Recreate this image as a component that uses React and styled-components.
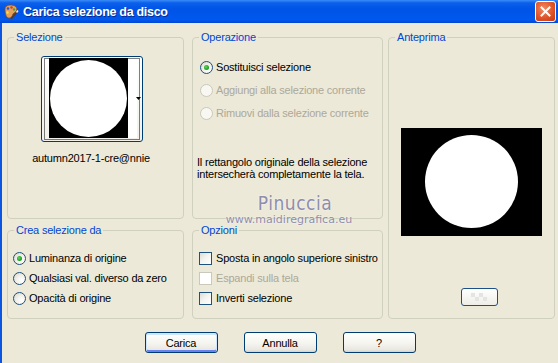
import React from "react"
import styled, { createGlobalStyle } from "styled-components"

const GlobalStyle = createGlobalStyle`
  html, body {
    margin: 0;
    padding: 0;
    background: #ece9d8;
  }
  body {
    font-family: "Liberation Sans", Arial, sans-serif;
    font-size: 11px;
    letter-spacing: -0.2px;
    color: #000;
  }
`

const Window = styled.div`
  position: relative;
  width: 558px;
  height: 363px;
  display: flex;
  flex-direction: column;
  background: #ece9d8;
  overflow: hidden;
`

const TitleBar = styled.div`
  height: 23px;
  flex: none;
  display: flex;
  align-items: center;
  gap: 4px;
  padding: 0 2px 0 3px;
  background: linear-gradient(
    to bottom,
    #3b8cf7 0px,
    #0a5fec 3px,
    #0054e6 40%,
    #0058ee 85%,
    #0047d4 100%
  );
`

const Title = styled.span`
  font-family: "Liberation Sans", Arial, sans-serif;
  font-weight: bold;
  font-size: 12.5px;
  color: #fff;
  text-shadow: 1px 1px 0 #0b2a8f;
  letter-spacing: -0.3px;
`

const CloseButton = styled.div`
  margin-left: auto;
  width: 19px;
  height: 19px;
  border: 1px solid #fff;
  border-radius: 3px;
  display: flex;
  align-items: center;
  justify-content: center;
  background: radial-gradient(circle at 40% 35%, #f08b63 0%, #e0542a 55%, #c2380f 100%);
`

const Frame = styled.div`
  flex: 1;
  display: flex;
  flex-direction: column;
  border-left: 2px solid #0a55e2;
`

const Groups = styled.div`
  display: grid;
  grid-template-columns: 177px 194px 167px;
  grid-template-rows: 189px 96px;
  column-gap: 5px;
  row-gap: 4px;
  margin: 7px 0 0 5px;
`

const Group = styled.fieldset`
  margin: 0;
  padding: 0;
  min-width: 0;
  border: 1px solid #d0d0bf;
  border-radius: 4px;
  width: ${(p) => (p.$width ? `${p.$width}px` : "auto")};
  justify-self: ${(p) => (p.$end ? "end" : "stretch")};
  grid-row: ${(p) => (p.$tall ? "1 / span 2" : "auto")};
  grid-column: ${(p) => p.$col || "auto"};
  box-sizing: border-box;
  display: flex;
  flex-direction: column;
`

const Legend = styled.legend`
  color: #0046d5;
  padding: 0 2px;
  margin-left: 6px;
  line-height: 14px;
  font-size: 11px;
`

const ThumbButton = styled.div`
  margin: 12px 0 0 33px;
  width: 102px;
  height: 86px;
  box-sizing: border-box;
  border: 1px solid #003c74;
  border-radius: 3px;
  background: linear-gradient(to bottom, #ffffff, #f1f0ea);
  display: flex;
`

const Caption = styled.div`
  margin-top: 10px;
  line-height: 13px;
  text-align: center;
  padding-right: 9px;
`

const OptionList = styled.div`
  display: flex;
  flex-direction: column;
  gap: ${(p) => p.$gap}px;
  padding-top: ${(p) => p.$top}px;
  padding-left: ${(p) => p.$left}px;
`

const Option = styled.label`
  display: flex;
  align-items: center;
  gap: ${(p) => (p.$box ? 4 : 3)}px;
  height: 13px;
  line-height: 13px;
  color: ${(p) => (p.$disabled ? "#aca899" : "#000")};
  white-space: nowrap;
`

const Radio = styled.span`
  width: 13px;
  height: 13px;
  flex: none;
  box-sizing: border-box;
  border-radius: 50%;
  border: 1px solid ${(p) => (p.$disabled ? "#cac8bb" : "#1c5180")};
  background: ${(p) =>
    p.$disabled
      ? "#f8f7f2"
      : "radial-gradient(circle at 70% 70%, #ffffff 0%, #f2f1ec 45%, #d6d4c9 100%)"};
  display: flex;
  align-items: center;
  justify-content: center;
  &::after {
    content: "";
    display: ${(p) => (p.$checked ? "block" : "none")};
    width: 5px;
    height: 5px;
    border-radius: 50%;
    background: radial-gradient(circle at 40% 40%, #5fd85f 0%, #21a121 60%, #148914 100%);
  }
`

const Check = styled.span`
  width: 13px;
  height: 13px;
  flex: none;
  box-sizing: border-box;
  border: 1px solid ${(p) => (p.$disabled ? "#cac8bb" : "#1c5180")};
  background: ${(p) =>
    p.$disabled ? "#ffffff" : "linear-gradient(135deg, #dcdcd7 0%, #f4f4f1 50%, #ffffff 100%)"};
`

const Description = styled.div`
  margin: 36px 0 0 4px;
  line-height: 12px;
`

const PreviewArea = styled.div`
  display: flex;
  flex-direction: column;
  align-items: center;
  padding-top: 84px;
`

const SmallButton = styled.div`
  margin: 52px 0 0 15px;
  width: 37px;
  height: 18px;
  box-sizing: border-box;
  border: 1px solid #1e4f88;
  border-radius: 3px;
  background: linear-gradient(to bottom, #ffffff, #eeede6);
  display: flex;
  align-items: center;
  justify-content: center;
`

const Footer = styled.div`
  display: flex;
  justify-content: center;
  gap: 26px;
  margin-top: 13px;
`

const Button = styled.button`
  width: 73px;
  height: 21px;
  padding: 0;
  font-family: inherit;
  font-size: 11px;
  letter-spacing: inherit;
  color: #000;
  border: 1px solid #003c74;
  border-radius: 3px;
  background: linear-gradient(to bottom, #ffffff 0%, #f5f4ef 55%, #e8e7e0 88%, #d8d3c8 100%);
  box-shadow: ${(p) =>
    p.$default ? "inset 0 1px 0 1px #cee7ff, inset 0 -1px 0 1px #6982ee" : "none"};
`

const Watermark = styled.div`
  position: absolute;
  left: 226px;
  top: 193px;
  width: 126px;
  display: flex;
  flex-direction: column;
  align-items: center;
  color: #8e8dac;
  text-shadow: 0 0 2px #ffffff;
  pointer-events: none;
`

const WatermarkName = styled.span`
  font-family: "DejaVu Sans Condensed", "DejaVu Sans", sans-serif;
  font-size: 19px;
  line-height: 20px;
  letter-spacing: 0.5px;
  padding-left: 12px;
`

const WatermarkSite = styled.span`
  font-family: "DejaVu Sans", sans-serif;
  font-size: 11px;
  line-height: 12px;
  letter-spacing: 0;
  margin-top: 1px;
`

const AppIcon = () => (
  <svg width="16" height="16" viewBox="0 0 16 16">
    <path d="M2 5 C2 1 8 0 12 2 C15 4 14 8 11 9 C9 10 10 13 7 14 C3 15 2 9 2 5Z" fill="#e7a05a" stroke="#8a4a1c" strokeWidth="0.8" />
    <circle cx="5" cy="4.5" r="1.3" fill="#2a58d8" />
    <circle cx="8.5" cy="3.5" r="1.2" fill="#d83a2a" />
    <circle cx="11" cy="5.5" r="1.2" fill="#3aa83a" />
    <circle cx="4.5" cy="8.5" r="1.2" fill="#f5e14a" />
    <path d="M8 15 L14 8" stroke="#5a3a1a" strokeWidth="1.6" />
    <path d="M13.5 8.5 L15 6.5" stroke="#e8e8e8" strokeWidth="1.6" />
  </svg>
)

const CloseIcon = () => (
  <svg width="11" height="11" viewBox="0 0 11 11">
    <path d="M1.5 1.5 L9.5 9.5 M9.5 1.5 L1.5 9.5" stroke="#fff" strokeWidth="2" strokeLinecap="square" />
  </svg>
)

const Thumbnail = () => (
  <svg width="100" height="84" viewBox="0 0 100 84">
    <rect x="7" y="1" width="79" height="80" fill="#000" />
    <rect x="86" y="1" width="9" height="80" fill="#fff" />
    <circle cx="46.5" cy="41.5" r="38.5" fill="#fff" />
    <rect x="2.5" y="1.5" width="95" height="81" fill="none" stroke="#000" strokeWidth="1" strokeDasharray="1 1" />
    <path d="M94 40 L99 40 L96.5 43 Z" fill="#000" />
  </svg>
)

const Preview = () => (
  <svg width="141" height="108" viewBox="0 0 141 108">
    <rect width="141" height="108" fill="#000" />
    <circle cx="70.5" cy="53.5" r="46.5" fill="#fff" />
  </svg>
)

const FadedChecker = () => (
  <svg width="16" height="8" viewBox="0 0 16 8">
    <rect x="0" y="0" width="4" height="4" fill="#e4e4e4" />
    <rect x="8" y="0" width="4" height="4" fill="#e4e4e4" />
    <rect x="4" y="4" width="4" height="4" fill="#e4e4e4" />
    <rect x="12" y="4" width="4" height="4" fill="#e4e4e4" />
  </svg>
)

const App = () => {
  return (
    <>
      <GlobalStyle />
      <Window>
        <TitleBar>
          <AppIcon />
          <Title>Carica selezione da disco</Title>
          <CloseButton>
            <CloseIcon />
          </CloseButton>
        </TitleBar>
        <Frame>
          <Groups>
            <Group>
              <Legend>Selezione</Legend>
              <ThumbButton>
                <Thumbnail />
              </ThumbButton>
              <Caption>autumn2017-1-cre@nnie</Caption>
            </Group>

            <Group $width={191} $end>
              <Legend>Operazione</Legend>
              <OptionList $gap={10} $top={17} $left={7}>
                <Option>
                  <Radio $checked />
                  Sostituisci selezione
                </Option>
                <Option $disabled>
                  <Radio $disabled />
                  Aggiungi alla selezione corrente
                </Option>
                <Option $disabled>
                  <Radio $disabled />
                  Rimuovi dalla selezione corrente
                </Option>
              </OptionList>
              <Description>
                Il rettangolo originale della selezione
                <br />
                intersecherà completamente la tela.
              </Description>
            </Group>

            <Group $tall $col="3">
              <Legend>Anteprima</Legend>
              <PreviewArea>
                <Preview />
                <SmallButton>
                  <FadedChecker />
                </SmallButton>
              </PreviewArea>
            </Group>

            <Group>
              <Legend>Crea selezione da</Legend>
              <OptionList $gap={7} $top={15} $left={5}>
                <Option>
                  <Radio $checked />
                  Luminanza di origine
                </Option>
                <Option>
                  <Radio />
                  Qualsiasi val. diverso da zero
                </Option>
                <Option>
                  <Radio />
                  Opacità di origine
                </Option>
              </OptionList>
            </Group>

            <Group $width={191} $end>
              <Legend>Opzioni</Legend>
              <OptionList $gap={7} $top={15} $left={6}>
                <Option $box>
                  <Check />
                  Sposta in angolo superiore sinistro
                </Option>
                <Option $box $disabled>
                  <Check $disabled />
                  Espandi sulla tela
                </Option>
                <Option $box>
                  <Check />
                  Inverti selezione
                </Option>
              </OptionList>
            </Group>
          </Groups>

          <Footer>
            <Button $default>Carica</Button>
            <Button>Annulla</Button>
            <Button>?</Button>
          </Footer>
        </Frame>

        <Watermark>
          <WatermarkName>Pinuccia</WatermarkName>
          <WatermarkSite>www.maidiregrafica.eu</WatermarkSite>
        </Watermark>
      </Window>
    </>
  )
}

export default App
